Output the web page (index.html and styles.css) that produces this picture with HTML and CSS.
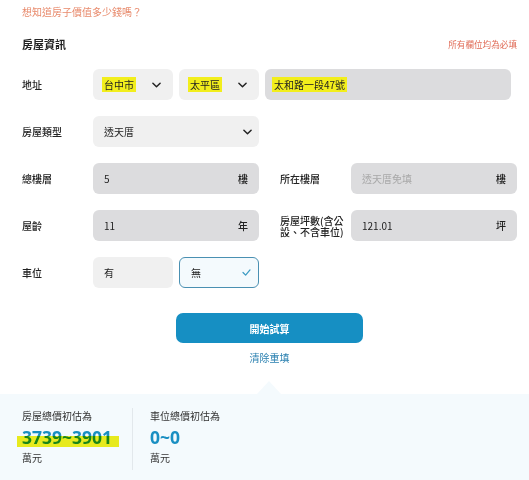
FILE: index.html
```html
<!DOCTYPE html>
<html lang="zh-Hant">
<head>
<meta charset="utf-8">
<link rel="stylesheet" href="styles.css">
</head>
<body>
<div class="page">
  <p class="intro">想知道房子價值多少錢嗎？</p>
  <div class="head">
    <h2 class="title">房屋資訊</h2>
    <span class="req">所有欄位均為必填</span>
  </div>

  <div class="form">
    <div class="row">
      <div class="label">地址</div>
      <div class="field sel w80"><span class="hl">台中市</span><svg class="chev" viewBox="0 0 10 6"><path d="M1 1l4 4 4-4" /></svg></div>
      <div class="field sel w80"><span class="hl">太平區</span><svg class="chev" viewBox="0 0 10 6"><path d="M1 1l4 4 4-4" /></svg></div>
      <div class="field inp addr"><span class="hl">太和路一段47號</span></div>
    </div>

    <div class="row">
      <div class="label">房屋類型</div>
      <div class="field sel w166 type"><span>透天厝</span><svg class="chev" viewBox="0 0 10 6"><path d="M1 1l4 4 4-4" /></svg></div>
    </div>

    <div class="row">
      <div class="label">總樓層</div>
      <div class="field inp w166"><span>5</span><span class="unit">樓</span></div>
      <div class="label second">所在樓層</div>
      <div class="field inp w166"><span class="ph">透天厝免填</span><span class="unit">樓</span></div>
    </div>

    <div class="row">
      <div class="label">屋齡</div>
      <div class="field inp w166"><span>11</span><span class="unit">年</span></div>
      <div class="label second two">房屋坪數(含公設、不含車位)</div>
      <div class="field inp w166"><span>121.01</span><span class="unit">坪</span></div>
    </div>

    <div class="row">
      <div class="label">車位</div>
      <div class="field opt w80"><span>有</span></div>
      <div class="field opt on w80"><span>無</span><svg class="check" viewBox="0 0 10 8"><path d="M1 4l3 3 5-6" /></svg></div>
    </div>
  </div>

  <div class="actions">
    <button class="submit">開始試算</button>
    <a class="reset">清除重填</a>
  </div>

  <div class="result">
    <div class="col">
      <div class="cap">房屋總價初估為</div>
      <div class="val mark">3739~3901</div>
      <div class="cap">萬元</div>
    </div>
    <div class="col">
      <div class="cap">車位總價初估為</div>
      <div class="val">0~0</div>
      <div class="cap">萬元</div>
    </div>
  </div>
</div>
</body>
</html>
```

FILE: styles.css
```css
* { box-sizing: border-box; }
html, body {
  margin: 0;
  padding: 0;
  background: #ffffff;
}
body {
  font-family: "Noto Sans CJK TC", "Noto Sans", sans-serif;
  color: #222;
  width: 529px;
  height: 480px;
  overflow: hidden;
}
.page {
  display: flex;
  flex-direction: column;
}
.intro {
  margin: 0;
  padding: 4px 22px 0;
  font-size: 10px;
  line-height: 16px;
  color: #e88a6c;
}
.head {
  display: flex;
  justify-content: space-between;
  align-items: center;
  padding: 0 12px 0 22px;
  margin-top: 16px;
  height: 16px;
}
.title {
  margin: 0;
  font-size: 11px;
  font-weight: 700;
  color: #222;
}
.req {
  font-size: 8.6px;
  color: #e06a55;
}
.form {
  display: flex;
  flex-direction: column;
  gap: 16px;
  padding: 0 12px 0 22px;
  margin-top: 17px;
}
.row {
  display: flex;
  align-items: center;
  height: 31px;
}
.label {
  width: 71px;
  font-size: 10px;
  font-weight: 500;
  color: #222;
  flex: none;
}
.label.second {
  width: 71px;
  margin-left: 21px;
}
.label.two {
  line-height: 11px;
  padding-right: 6px;
}
.field {
  height: 31px;
  border-radius: 6px;
  display: flex;
  align-items: center;
  justify-content: space-between;
  padding: 0 11px 0 11px;
  font-size: 10px;
  color: #222;
  flex: none;
}
.field + .field { margin-left: 6px; }
.w80 { width: 80px; }
.w166 { width: 166px; }
.sel { background: #f0f0f0; padding-right: 12px; }
.sel.type { padding-right: 7px; }
.inp { background: #dcdcde; }
.addr { width: 246px; padding-left: 9px; }
.opt { background: #f0f0f0; }
.opt.on {
  background: #f4fafd;
  border: 1px solid #4a90b2;
  padding-right: 7px;
}
.hl {
  background: #f2ee1c;
  padding: 0 2px;
  margin-left: -2px;
}
.unit { font-weight: 500; }
.ph { color: #a8a8a8; }
.chev {
  width: 9px;
  height: 6px;
  fill: none;
  stroke: #222;
  stroke-width: 1.6;
  stroke-linecap: round;
  stroke-linejoin: round;
}
.check {
  width: 9px;
  height: 7px;
  fill: none;
  stroke: #3a9ac2;
  stroke-width: 1.4;
  stroke-linecap: round;
  stroke-linejoin: round;
}
.actions {
  display: flex;
  flex-direction: column;
  align-items: center;
  padding: 0 12px 0 22px;
  margin-top: 25px;
}
.submit {
  width: 187px;
  height: 30px;
  border: none;
  border-radius: 7px;
  background: #168fc3;
  color: #ffffff;
  font-family: inherit;
  font-size: 10px;
  font-weight: 700;
}
.reset {
  margin-top: 8px;
  font-size: 10px;
  color: #2a80b0;
  line-height: 14px;
}
.result {
  position: relative;
  margin-top: 29px;
  background: #f4fafd;
  height: 100px;
  display: flex;
  padding: 14px 0 0 22px;
}
.result::before {
  content: "";
  position: absolute;
  left: 257px;
  top: -13px;
  width: 24px;
  height: 13px;
  background: #f4fafd;
  clip-path: polygon(50% 0, 100% 100%, 0 100%);
}
.col {
  display: flex;
  flex-direction: column;
  height: 62px;
  gap: 2px;
}
.col:first-child {
  width: 111px;
  border-right: 1px solid #e2e8ec;
}
.col + .col { padding-left: 17px; }
.cap {
  font-size: 10px;
  color: #333;
  line-height: 16px;
}
.val {
  font-size: 17.5px;
  font-weight: 700;
  color: #1a8fc2;
  line-height: 22px;
  font-family: "Noto Sans", "Noto Sans CJK TC", sans-serif;
}
.val.mark {
  position: relative;
  align-self: flex-start;
}
.val.mark::after {
  content: "";
  position: absolute;
  left: -5px;
  right: -7px;
  top: 10px;
  height: 11px;
  background: #f2ef1e;
  mix-blend-mode: multiply;
}
```
